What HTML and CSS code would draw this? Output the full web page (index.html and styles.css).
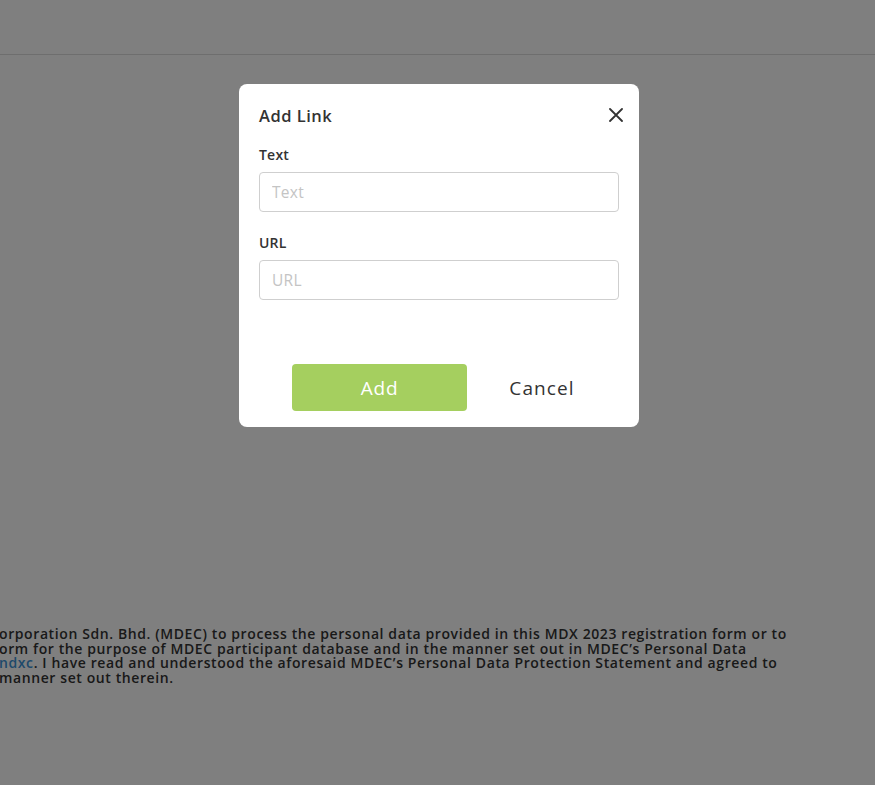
FILE: index.html
```html
<!DOCTYPE html>
<html lang="en">
<head>
<meta charset="utf-8">
<title>Add Link</title>
<link rel="stylesheet" href="styles.css">
</head>
<body>
<div class="page">
  <header class="topbar"></header>
  <main class="content">
    <div class="consent">
      <div class="line">orporation Sdn. Bhd. (MDEC) to process the personal data provided in this MDX 2023 registration form or to</div>
      <div class="line">orm for the purpose of MDEC participant database and in the manner set out in MDEC’s Personal Data</div>
      <div class="line"><a class="link" href="#">ndxc</a>. I have read and understood the aforesaid MDEC’s Personal Data Protection Statement and agreed to</div>
      <div class="line">manner set out therein.</div>
    </div>
  </main>
</div>
<div class="overlay">
  <div class="modal">
    <div class="modal-head">
      <h2 class="modal-title">Add Link</h2>
      <button class="close" aria-label="Close">
        <svg width="14" height="14" viewBox="0 0 14 14"><path d="M1 1L13 13M13 1L1 13" stroke="#333" stroke-width="1.8" stroke-linecap="round"/></svg>
      </button>
    </div>
    <label class="field">
      <span class="label">Text</span>
      <input class="input" type="text" placeholder="Text">
    </label>
    <label class="field field-url">
      <span class="label">URL</span>
      <input class="input" type="text" placeholder="URL">
    </label>
    <div class="actions">
      <button class="btn-add">Add</button>
      <button class="btn-cancel">Cancel</button>
    </div>
  </div>
</div>
</body>
</html>
```

FILE: styles.css
```css
* { box-sizing: border-box; }
html, body { margin: 0; padding: 0; }
body {
  width: 875px;
  height: 785px;
  overflow: hidden;
  background: #fff;
  font-family: "Open Sans", "DejaVu Sans", sans-serif;
  color: #333;
}
.page { height: 785px; }
.topbar {
  height: 55px;
  border-bottom: 1px solid #dcdcdc;
}
.content { padding-top: 572px; }
.consent {
  font-size: 14px;
  font-weight: 600;
  letter-spacing: 0.6px;
  line-height: 14.7px;
  color: #333;
  white-space: nowrap;
  margin-left: -1px;
}
.link { color: #3d93d6; text-decoration: none; }

.overlay {
  position: fixed;
  inset: 0;
  background: rgba(0, 0, 0, 0.5);
  display: flex;
  justify-content: center;
  align-items: flex-start;
  padding-top: 84px;
  padding-left: 3px;
}
.modal {
  width: 400px;
  height: 343px;
  background: #fff;
  border-radius: 8px;
  padding: 19px 16px 16px 20px;
  display: flex;
  flex-direction: column;
}
.modal-head {
  display: flex;
  align-items: center;
  justify-content: space-between;
  height: 24px;
}
.modal-title {
  margin: 0;
  font-size: 16.5px;
  font-weight: 600;
  letter-spacing: 0.5px;
  color: #333;
}
.close {
  border: 0;
  background: none;
  padding: 0;
  width: 14px;
  height: 14px;
  display: flex;
  cursor: pointer;
}
.field {
  display: flex;
  flex-direction: column;
  width: 360px;
  margin-top: 18px;
}
.field-url { margin-top: 21px; }
.label {
  font-size: 14px;
  font-weight: 600;
  letter-spacing: 0.2px;
  color: #333;
  line-height: 20px;
  margin-bottom: 7px;
}
.input {
  height: 40px;
  border: 1px solid #cfcfcf;
  border-radius: 4px;
  padding: 0 12px;
  font-family: inherit;
  font-size: 15.5px;
  letter-spacing: 0.3px;
  color: #333;
  outline: none;
}
.input::placeholder { color: #c4c4c4; }
.actions {
  margin-top: auto;
  display: flex;
  align-items: center;
  padding-left: 33px;
}
.btn-add {
  width: 175px;
  height: 47px;
  border: 0;
  border-radius: 4px;
  background: #a5cf5f;
  color: #fff;
  font-family: inherit;
  font-size: 19px;
  letter-spacing: 0.8px;
}
.btn-cancel {
  width: 150px;
  height: 47px;
  border: 0;
  background: none;
  color: #333;
  font-family: inherit;
  font-size: 19px;
  letter-spacing: 1.1px;
}
```
